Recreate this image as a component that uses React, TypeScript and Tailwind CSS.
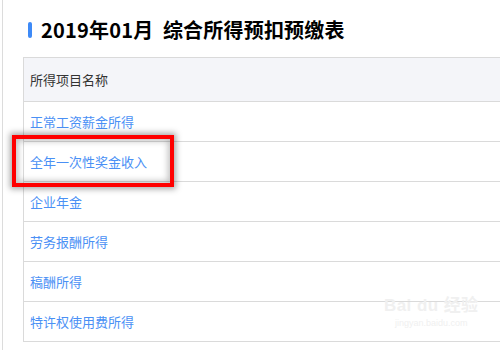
const rows = [
  "正常工资薪金所得",
  "全年一次性奖金收入",
  "企业年金",
  "劳务报酬所得",
  "稿酬所得",
  "特许权使用费所得",
];

export default function App() {
  return (
    <div
      className="relative h-[350px] w-[500px] overflow-hidden bg-white"
      style={{ fontFamily: '"Noto Sans CJK SC", "Noto Sans", sans-serif' }}
    >
      <div className="ml-[2px] h-full border-l border-[#dcdcdc] pl-[20px]">
        <div className="flex h-[57px] items-center pt-[3px]">
          <span className="ml-[5px] h-[16px] w-[4px] rounded-full bg-[#3d8af7]" />
          <h1 className="ml-[9px] text-[20px] font-bold leading-none tracking-[0.2px] text-black">
            2019年01月&nbsp;&nbsp;综合所得预扣预缴表
          </h1>
        </div>
        <div className="border-l border-t border-[#dadada]">
          <div className="flex h-[44px] items-center border-b border-[#dadada] bg-[#f4f5f9] pl-[6px] text-[13px] text-[#333]">
            所得项目名称
          </div>
          {rows.map((r) => (
            <div
              key={r}
              className="flex h-[40px] items-center border-b border-[#dadada] pl-[6px] text-[13px] text-[#4a90f5]"
            >
              {r}
            </div>
          ))}
        </div>
      </div>

      <div className="absolute left-[12px] top-[135px] h-[52px] w-[162px] border-[4px] border-[#f00] shadow-[0_0_6px_2px_rgba(0,0,0,0.35),inset_0_0_6px_2px_rgba(0,0,0,0.25)]" />

      <div
        className="absolute left-[384px] top-[297px] flex flex-col items-center text-[#f0f0f0]"
        style={{ fontFamily: '"Liberation Sans", "Noto Sans CJK SC", sans-serif' }}
      >
        <div className="text-[17px] font-bold leading-none tracking-wide">Bai du 经验</div>
        <div className="mt-[5px] text-[9px] leading-none">jingyan.baidu.com</div>
      </div>
    </div>
  );
}
